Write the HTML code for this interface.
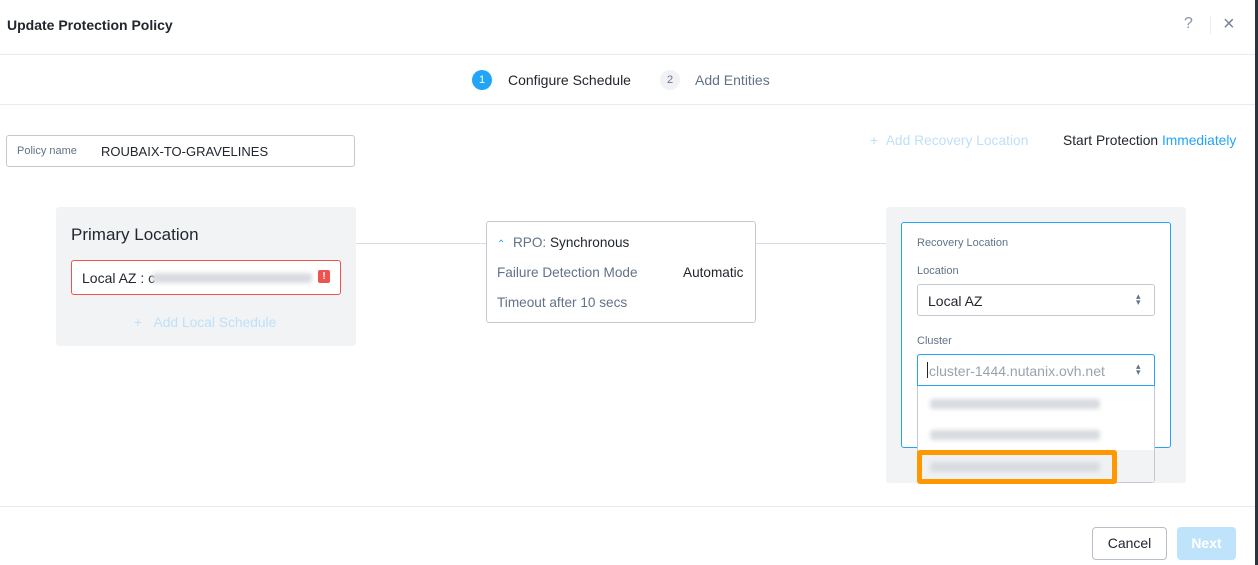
<!DOCTYPE html>
<html><head><style>
*{box-sizing:border-box;margin:0;padding:0}
body{width:1258px;height:565px;position:relative;overflow:hidden;background:#fff;font-family:"Liberation Sans",sans-serif;color:#22272e;font-size:14px}
.a{position:absolute}
.line{position:absolute;height:1px;background:#e9ecef}
.blur{position:absolute;height:10px;background:#d8dbe0;filter:blur(2px);border-radius:3px}
</style></head><body>
<div class="a" style="left:1255px;top:0;width:3px;height:565px;background:#2b3440"></div>
<div class="a" style="left:7px;top:17px;font-weight:bold;font-size:14px">Update Protection Policy</div>
<div class="a" style="left:1184px;top:15px;color:#8a94a3;font-size:16px">?</div>
<div class="a" style="left:1210px;top:16px;width:1px;height:18px;background:#eceef1"></div>
<div class="a" style="left:1223px;top:13px;color:#7a8594;font-size:20px">×</div>
<div class="line" style="left:0;top:54px;width:1255px"></div>
<div class="a" style="left:472px;top:70px;width:20px;height:20px;border-radius:50%;background:#22a5f7;color:#fff;font-size:11px;text-align:center;line-height:20px">1</div>
<div class="a" style="left:508px;top:72px;font-size:14px">Configure Schedule</div>
<div class="a" style="left:660px;top:70px;width:20px;height:20px;border-radius:50%;background:#f0f2f5;color:#6b7685;font-size:11px;text-align:center;line-height:20px">2</div>
<div class="a" style="left:695px;top:72px;font-size:14px;color:#627386">Add Entities</div>
<div class="line" style="left:0;top:104px;width:1255px"></div>
<div class="a" style="left:6px;top:135px;width:349px;height:32px;border:1px solid #c4c9d1;border-radius:3px"></div>
<div class="a" style="left:17px;top:145px;font-size:11px;color:#627386">Policy name</div>
<div class="a" style="left:101px;top:144px;font-size:13px">ROUBAIX-TO-GRAVELINES</div>
<div class="a" style="left:870px;top:133px;font-size:13.8px;color:#bfe0f7">+&nbsp;&nbsp;Add Recovery Location</div>
<div class="a" style="left:1063px;top:133px;font-size:13.8px">Start Protection <span style="color:#22a5f7">Immediately</span></div>
<div class="a" style="left:56px;top:207px;width:300px;height:139px;background:#f2f3f5;border-radius:3px"></div>
<div class="a" style="left:71px;top:225px;font-size:17px">Primary Location</div>
<div class="a" style="left:71px;top:260px;width:270px;height:35px;border:1px solid #ef5350;border-radius:3px;background:#fff"></div>
<div class="a" style="left:82px;top:270px;font-size:14px">Local AZ : c</div>
<div class="blur" style="left:152px;top:273px;width:160px"></div>
<div class="a" style="left:318px;top:270px;width:12px;height:13px;background:#ef5350;border-radius:2px;color:#fff;font-size:10px;font-weight:bold;text-align:center;line-height:13px">!</div>
<div class="a" style="left:134px;top:315px;font-size:13.8px;color:#bfe0f7">+&nbsp;&nbsp;&nbsp;Add Local Schedule</div>
<div class="a" style="left:356px;top:243px;width:130px;height:1px;background:#d9dde2"></div>
<div class="a" style="left:755px;top:243px;width:131px;height:1px;background:#d9dde2"></div>
<div class="a" style="left:486px;top:221px;width:270px;height:102px;border:1px solid #c4c9d1;border-radius:3px"></div>
<div class="a" style="left:497px;top:235px;font-size:13.6px"><span style="color:#22a5f7;font-size:10px">⌃</span>&nbsp;&nbsp;<span style="color:#627386">RPO:</span> Synchronous</div>
<div class="a" style="left:497px;top:265px;font-size:13.6px;color:#627386">Failure Detection Mode</div>
<div class="a" style="left:683px;top:265px;font-size:13.6px">Automatic</div>
<div class="a" style="left:497px;top:295px;font-size:13.6px;color:#627386">Timeout after 10 secs</div>
<div class="a" style="left:886px;top:207px;width:300px;height:276px;background:#f2f3f5;border-radius:3px"></div>
<div class="a" style="left:901px;top:222px;width:270px;height:226px;border:1px solid #22a5f7;border-radius:3px;background:#fff"></div>
<div class="a" style="left:917px;top:237px;font-size:11px;color:#627386">Recovery Location</div>
<div class="a" style="left:917px;top:265px;font-size:11px;color:#627386">Location</div>
<div class="a" style="left:917px;top:284px;width:238px;height:32px;border:1px solid #c4c9d1;border-radius:3px"></div>
<div class="a" style="left:928px;top:293px;font-size:14px">Local AZ</div>
<div class="a" style="left:1136px;top:293px;font-size:9px;color:#627386;line-height:6px">▴<br>▾</div>
<div class="a" style="left:917px;top:335px;font-size:11px;color:#627386">Cluster</div>
<div class="a" style="left:917px;top:354px;width:238px;height:129px;border:1px solid #c4c9d1;border-radius:3px;background:#fff"></div>
<div class="a" style="left:917px;top:354px;width:238px;height:32px;border:1px solid #22a5f7;border-radius:3px 3px 0 0"></div>
<div class="a" style="left:927px;top:362px;width:1px;height:16px;background:#222"></div>
<div class="a" style="left:929px;top:363px;font-size:14px;color:#9aa3ad">cluster-1444.nutanix.ovh.net</div>
<div class="a" style="left:1136px;top:363px;font-size:9px;color:#627386;line-height:6px">▴<br>▾</div>
<div class="blur" style="left:930px;top:399px;width:170px"></div>
<div class="blur" style="left:930px;top:430px;width:170px"></div>
<div class="a" style="left:918px;top:450px;width:236px;height:32px;background:#f2f3f5"></div>
<div class="a" style="left:917px;top:450px;width:200px;height:34px;border:5px solid #ff9800;border-radius:3px;background:#f0f1f3"></div>
<div class="blur" style="left:930px;top:462px;width:170px"></div>
<div class="line" style="left:0;top:506px;width:1255px"></div>
<div class="a" style="left:1092px;top:527px;width:75px;height:33px;border:1px solid #b8bec7;border-radius:4px;text-align:center;line-height:31px;font-size:14px">Cancel</div>
<div class="a" style="left:1177px;top:527px;width:59px;height:33px;background:#bfe3fb;border-radius:4px;text-align:center;line-height:33px;font-size:14px;color:#fff;font-weight:bold">Next</div>
</body></html>
